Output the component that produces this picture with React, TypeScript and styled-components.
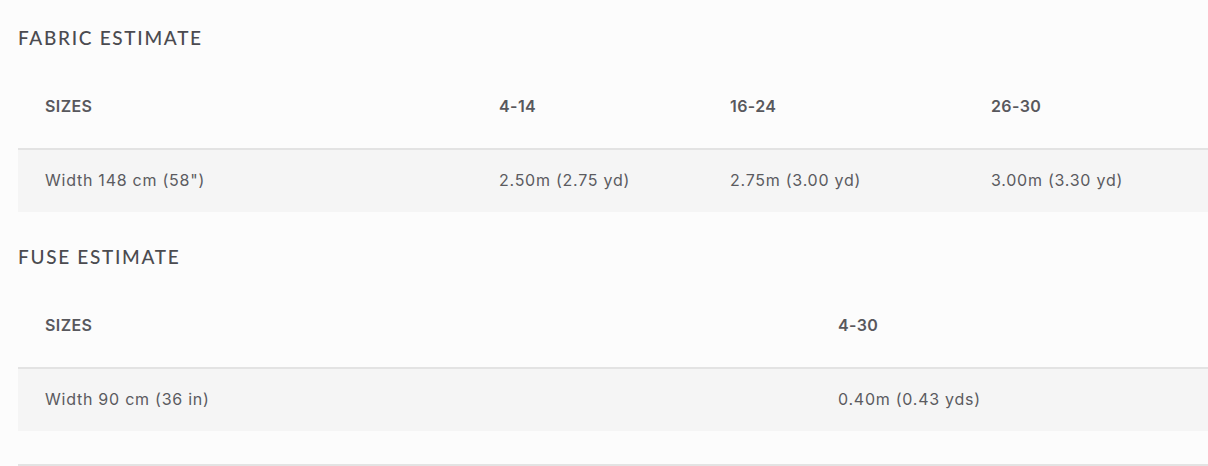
import styled, { createGlobalStyle } from 'styled-components';

const GlobalStyle = createGlobalStyle`
  html, body {
    margin: 0;
    padding: 0;
    background: #fcfcfc;
  }
  body {
    font-family: 'Inter', 'Liberation Sans', sans-serif;
    color: #555559;
  }
`;

const Page = styled.div`
  padding: 26px 0 0 18px;
  width: 1190px;
  overflow: hidden;
`;

const Section = styled.section`
  margin-bottom: 33px;
`;

const Heading = styled.h3`
  margin: 0 0 26px;
  font-family: 'Lato', 'Liberation Sans', sans-serif;
  font-size: 19px;
  line-height: 24px;
  font-weight: 500;
  letter-spacing: 1.7px;
  color: #4b4b50;
  text-transform: uppercase;
`;

const Table = styled.div<{ $cols: string }>`
  display: grid;
  grid-template-columns: ${(p) => p.$cols};
`;

const HeadCell = styled.div`
  padding: 20px 0 32px 27px;
  font-size: 16px;
  line-height: 20px;
  font-weight: 600;
  letter-spacing: 0.4px;
  color: #58585d;
  border-bottom: 2px solid #e3e3e3;
`;

const BodyCell = styled.div`
  padding: 19px 0 21px 27px;
  font-size: 16px;
  line-height: 22px;
  letter-spacing: 0.75px;
  color: #5b5b60;
  background: #f5f5f5;
`;

const Divider = styled.hr`
  margin: 0;
  border: 0;
  border-top: 2px solid #e3e3e3;
`;

type Estimate = {
  title: string;
  cols: string;
  head: string[];
  row: string[];
};

const estimates: Estimate[] = [
  {
    title: 'Fabric Estimate',
    cols: '454px 231px 261px 1fr',
    head: ['Sizes', '4-14', '16-24', '26-30'],
    row: ['Width 148 cm (58")', '2.50m (2.75 yd)', '2.75m (3.00 yd)', '3.00m (3.30 yd)'],
  },
  {
    title: 'Fuse Estimate',
    cols: '793px 1fr',
    head: ['Sizes', '4-30'],
    row: ['Width 90 cm (36 in)', '0.40m (0.43 yds)'],
  },
];

export default function App() {
  return (
    <>
      <GlobalStyle />
      <Page>
        {estimates.map((e) => (
          <Section key={e.title}>
            <Heading>{e.title}</Heading>
            <Table $cols={e.cols}>
              {e.head.map((h) => (
                <HeadCell key={h}>{h.toUpperCase()}</HeadCell>
              ))}
              {e.row.map((c) => (
                <BodyCell key={c}>{c}</BodyCell>
              ))}
            </Table>
          </Section>
        ))}
        <Divider />
      </Page>
    </>
  );
}
